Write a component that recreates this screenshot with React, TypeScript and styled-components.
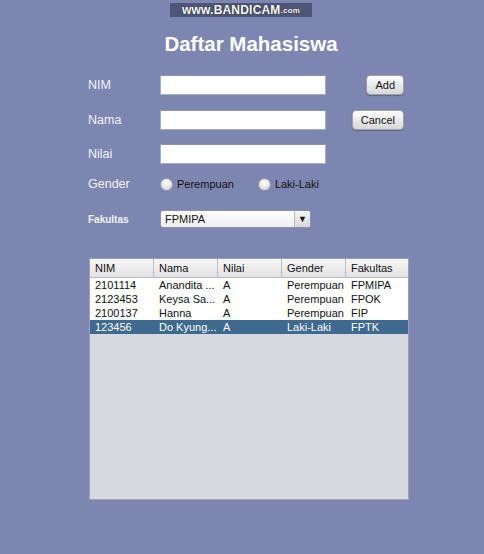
import React from "react";
import styled, { createGlobalStyle } from "styled-components";

const Global = createGlobalStyle`
  html, body { margin: 0; padding: 0; background: #7d86b0; }
  body { font-family: "Liberation Sans", Arial, sans-serif; }
`;

const Page = styled.div`
  width: 484px;
  height: 554px;
  background: #7d86b0;
  display: flex;
  flex-direction: column;
  position: relative;
  overflow: hidden;
`;

const Watermark = styled.div`
  position: absolute;
  top: 3px;
  left: 170px;
  width: 142px;
  height: 14px;
  background: #4f5575;
  color: #fff;
  font: bold 12px "Liberation Sans", Arial, sans-serif;
  letter-spacing: 0.2px;
  display: flex;
  align-items: center;
  justify-content: center;
  text-shadow: 0 0 1px #000;
  & small { font-size: 8px; }
`;

const Title = styled.h1`
  margin: 32px 0 0 0;
  text-align: center;
  font: bold 20.5px "Liberation Sans", Arial, sans-serif;
  color: #ffffff;
  padding-left: 18px;
  height: 24px;
  line-height: 24px;
`;

const Form = styled.div`
  display: flex;
  flex-direction: column;
  margin-top: 19px;
  padding-left: 88px;
`;

const Row = styled.div<{ $mt: number }>`
  display: grid;
  grid-template-columns: 72px 166px 1fr;
  align-items: center;
  height: 20px;
  margin-top: ${(p) => p.$mt}px;
`;

const Label = styled.span<{ $small?: boolean }>`
  color: #f2f3f8;
  font-size: ${(p) => (p.$small ? "10px" : "12.5px")};
  font-weight: ${(p) => (p.$small ? "bold" : "normal")};
`;

const Input = styled.div`
  height: 20px;
  box-sizing: border-box;
  background: #ffffff;
  border: 1px solid #a8adc2;
  border-top-color: #8f94a8;
`;

const ButtonCell = styled.div`
  display: flex;
  justify-content: flex-end;
  padding-right: 80px;
`;

const Button = styled.button`
  height: 20px;
  padding: 0 8px;
  font: 11px "Liberation Sans", Arial, sans-serif;
  color: #111;
  background: linear-gradient(#ffffff, #e6e6e6 60%, #d8d8d8);
  border: 1px solid #9da0aa;
  border-radius: 4px;
  box-shadow: 0 1px 1px rgba(0, 0, 0, 0.25);
`;

const Radios = styled.div`
  display: flex;
  align-items: center;
  grid-column: 2 / 4;
`;

const Radio = styled.span<{ $gap: number }>`
  display: flex;
  align-items: center;
  margin-right: ${(p) => p.$gap}px;
  font-size: 11px;
  color: #111;
  &::before {
    content: "";
    width: 11px;
    height: 11px;
    border-radius: 50%;
    background: radial-gradient(circle at 50% 35%, #ffffff, #dcdcdc 70%, #c4c4c4);
    border: 1px solid #9a9ca8;
    margin-right: 4px;
  }
`;

const Select = styled.div`
  width: 151px;
  height: 18px;
  box-sizing: border-box;
  border: 1px solid #8e92a4;
  border-radius: 3px;
  background: linear-gradient(#ffffff, #eeeeee);
  display: flex;
  align-items: center;
  font-size: 11px;
  color: #111;
  overflow: hidden;
`;

const SelectText = styled.span`
  flex: 1;
  padding-left: 4px;
`;

const SelectArrow = styled.span`
  width: 15px;
  height: 100%;
  border-left: 1px solid #b8bbc6;
  background: linear-gradient(#f4f4f4, #d8d8dc);
  display: flex;
  align-items: center;
  justify-content: center;
  font-size: 9px;
  color: #111;
`;

const Table = styled.div`
  margin: 29px 0 0 89px;
  width: 320px;
  height: 242px;
  box-sizing: border-box;
  border: 1px solid #9ea3b4;
  background: #d6d9e0;
  display: flex;
  flex-direction: column;
`;

const Header = styled.div`
  display: grid;
  grid-template-columns: 64px 64px 64px 64px 1fr;
  height: 18px;
  background: linear-gradient(#f6f6f6, #e3e3e6);
  border-bottom: 1px solid #b8bbc4;
`;

const HeadCell = styled.div`
  font-size: 11px;
  color: #111;
  padding-left: 5px;
  display: flex;
  align-items: center;
  border-right: 1px solid #b8bbc4;
  &:last-child { border-right: none; }
`;

const DataRow = styled.div<{ $selected?: boolean }>`
  display: grid;
  grid-template-columns: 64px 64px 64px 64px 1fr;
  height: 14px;
  background: ${(p) => (p.$selected ? "#3d6a8e" : "#ffffff")};
  color: ${(p) => (p.$selected ? "#ffffff" : "#111111")};
`;

const Cell = styled.div`
  font-size: 11px;
  padding-left: 5px;
  line-height: 14px;
  white-space: nowrap;
  overflow: hidden;
`;

const rows = [
  ["2101114", "Anandita ...", "A", "Perempuan", "FPMIPA"],
  ["2123453", "Keysa Sa...", "A", "Perempuan", "FPOK"],
  ["2100137", "Hanna", "A", "Perempuan", "FIP"],
  ["123456", "Do Kyung...", "A", "Laki-Laki", "FPTK"],
];

export default function App() {
  return (
    <Page>
      <Global />
      <Watermark>
        www.BANDICAM<small>.com</small>
      </Watermark>
      <Title>Daftar Mahasiswa</Title>
      <Form>
        <Row $mt={0}>
          <Label>NIM</Label>
          <Input />
          <ButtonCell>
            <Button>Add</Button>
          </ButtonCell>
        </Row>
        <Row $mt={15}>
          <Label>Nama</Label>
          <Input />
          <ButtonCell>
            <Button>Cancel</Button>
          </ButtonCell>
        </Row>
        <Row $mt={14}>
          <Label>Nilai</Label>
          <Input />
        </Row>
        <Row $mt={10}>
          <Label>Gender</Label>
          <Radios>
            <Radio $gap={24}>Perempuan</Radio>
            <Radio $gap={0}>Laki-Laki</Radio>
          </Radios>
        </Row>
        <Row $mt={15}>
          <Label $small>Fakultas</Label>
          <Select>
            <SelectText>FPMIPA</SelectText>
            <SelectArrow>▼</SelectArrow>
          </Select>
        </Row>
      </Form>
      <Table>
        <Header>
          {["NIM", "Nama", "Nilai", "Gender", "Fakultas"].map((h) => (
            <HeadCell key={h}>{h}</HeadCell>
          ))}
        </Header>
        {rows.map((r, i) => (
          <DataRow key={i} $selected={i === 3}>
            {r.map((c, j) => (
              <Cell key={j}>{c}</Cell>
            ))}
          </DataRow>
        ))}
      </Table>
    </Page>
  );
}
